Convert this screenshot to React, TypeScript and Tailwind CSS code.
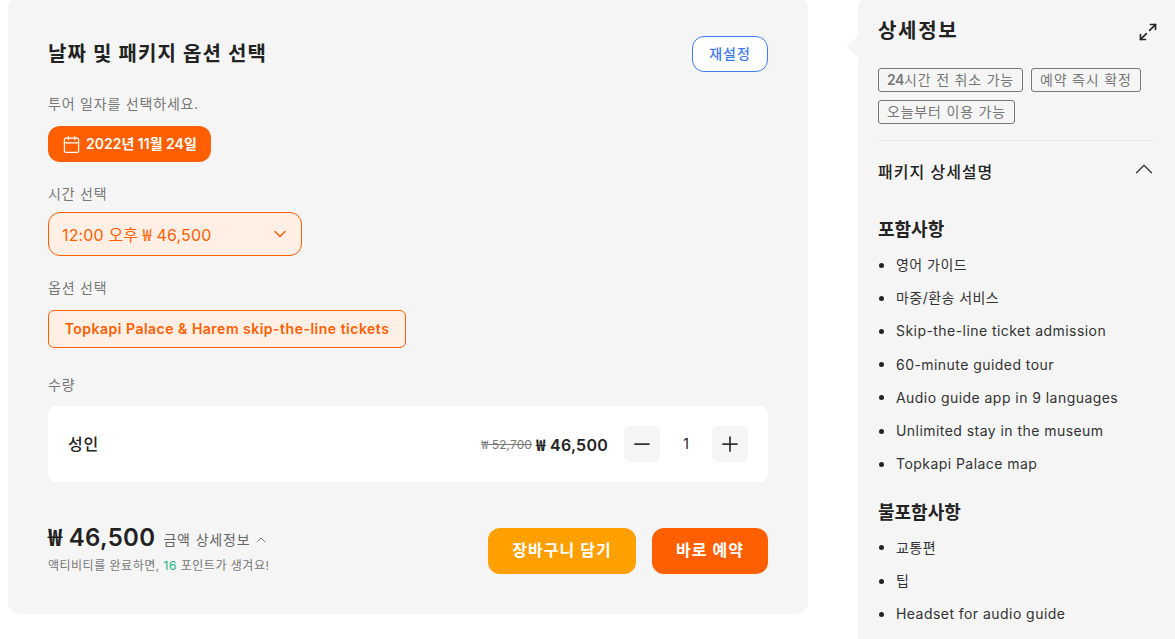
import React from 'react';
import { Calendar, ChevronDown, ChevronUp, Minus, Plus, Maximize2 } from 'lucide-react';

const font = "font-['Inter','Noto_Sans_CJK_KR',sans-serif]";

const included = [
  '영어 가이드',
  '마중/환송 서비스',
  'Skip-the-line ticket admission',
  '60-minute guided tour',
  'Audio guide app in 9 languages',
  'Unlimited stay in the museum',
  'Topkapi Palace map',
];

const excluded = ['교통편', '팁', 'Headset for audio guide'];

// the won sign comes from the CJK font, it is narrower than Inter's
const Won = () => <span className="font-['Noto_Sans_CJK_KR',sans-serif]">₩</span>;

const BulletList = ({ items }: { items: string[] }) => (
  <ul className="mt-[4.5px]">
    {items.map((item) => (
      <li key={item} className="flex h-[33.2px] items-center text-sm text-[#333] tracking-[0.45px]">
        <span className="ml-[1px] mr-[12px] h-[5px] w-[5px] rounded-full bg-[#222]" />
        {item}
      </li>
    ))}
  </ul>
);

const Tag = ({ children }: { children: React.ReactNode }) => (
  <span className="flex h-[24px] items-center rounded-[3px] border border-[#777] px-2 text-sm text-[#777] tracking-[0.8px]">
    {children}
  </span>
);

const App: React.FC = () => {
  return (
    <div className={`flex h-[639px] w-[1175px] overflow-hidden bg-white ${font}`}>
      {/* left panel */}
      <div className="ml-2 -mt-1 h-[618px] w-[800px] shrink-0 rounded-xl bg-[#f5f5f5] px-10 pt-[40px]">
        <div className="flex items-start justify-between">
          <h2 className="mt-[4px] text-xl font-semibold tracking-[1.05px] text-[#222]">날짜 및 패키지 옵션 선택</h2>
          <button className="h-[36px] w-[76px] rounded-xl border border-[#3f7bf5] bg-white text-sm font-medium tracking-[1px] text-[#3f7bf5]">
            재설정
          </button>
        </div>

        <p className="mt-[22px] text-sm tracking-[0.8px] text-[#777]">투어 일자를 선택하세요.</p>
        <div className="mt-[12px] flex h-[36px] w-[163px] items-center gap-[5px] rounded-xl bg-[#ff5f00] pl-[14px] text-sm font-semibold text-white">
          <Calendar size={19} strokeWidth={1.5} />
          2022년 11월 24일
        </div>

        <p className="mt-[22px] text-sm tracking-[0.8px] text-[#777]">시간 선택</p>
        <div className="mt-[8px] flex h-[44px] w-[254px] items-center justify-between rounded-xl border border-[#ff5f00] bg-[#ffefe5] pl-[13px] pr-[11px] text-base tracking-[0.15px] text-[#ff5f00]">
          <span>12:00 오후 <Won /> 46,500</span>
          <ChevronDown size={20} strokeWidth={1.75} />
        </div>

        <p className="mt-[22px] text-sm tracking-[0.8px] text-[#777]">옵션 선택</p>
        <div className="mt-[12px] flex h-[38px] w-[358px] items-center justify-center rounded-md border border-[#ff5f00] bg-[#ffefe5] text-sm font-semibold text-[#ff5f00] tracking-[0.5px]">
          Topkapi Palace &amp; Harem skip-the-line tickets
        </div>

        <p className="mt-[27px] text-sm tracking-[0.8px] text-[#777]">수량</p>
        <div className="mt-[11px] flex h-[76px] items-center justify-between rounded-lg bg-white px-5">
          <span className="text-base font-medium tracking-[0.7px] text-[#222]">성인</span>
          <div className="flex items-center">
            <span className="text-xs tracking-[0.1px] text-[#777] line-through"><Won /> 52,700</span>
            <span className="ml-1 text-base font-semibold tracking-[0.25px] text-[#222]"><Won /> 46,500</span>
            <button className="ml-4 flex h-9 w-9 items-center justify-center rounded-md bg-[#f5f5f5] text-[#333]">
              <Minus size={24} strokeWidth={1.75} />
            </button>
            <span className="w-[52px] text-center text-sm text-[#222]">1</span>
            <button className="flex h-9 w-9 items-center justify-center rounded-md bg-[#f5f5f5] text-[#333]">
              <Plus size={24} strokeWidth={1.75} />
            </button>
          </div>
        </div>

        <div className="mt-[46px] flex items-start justify-between">
          <div className="-mt-[8px]">
            <div className="flex items-center">
              <span className="text-2xl font-semibold tracking-[0.3px] text-[#222]"><Won /> 46,500</span>
              <span className="ml-2 mt-[6px] text-sm tracking-[0.85px] text-[#666]">금액 상세정보</span>
              <ChevronUp size={16} strokeWidth={1.25} className="ml-[2px] mt-[6px] text-[#666]" />
            </div>
            <p className="mt-[4px] text-xs tracking-[0.5px] text-[#777]">
              액티비티를 완료하면, <span className="text-[#1fb57f]">16</span> 포인트가 생겨요!
            </p>
          </div>
          <div className="flex gap-4">
            <button className="h-[46px] w-[148px] rounded-xl bg-[#ff9f00] pb-[2px] text-base font-semibold tracking-[1px] text-white">
              장바구니 담기
            </button>
            <button className="h-[46px] w-[116px] rounded-xl bg-[#ff5f00] pb-[2px] text-base font-semibold tracking-[1px] text-white">
              바로 예약
            </button>
          </div>
        </div>
      </div>

      {/* right panel */}
      <div className="relative ml-[50px] -mt-1 w-[317px] shrink-0 rounded-tl-xl bg-[#f5f5f5] pl-5 pr-[20px] pt-[21px]">
        <svg className="absolute left-[-12px] top-[36px]" width="13" height="30" viewBox="0 0 13 30">
          <path d="M13 0C12 6 8 7 3 12C0.5 14.5 0.5 15.5 3 18C8 23 12 24 13 30Z" fill="#f5f5f5" />
        </svg>
        <div className="flex h-[28px] items-center justify-between">
          <h3 className="text-xl font-semibold tracking-[1.7px] text-[#222]">상세정보</h3>
          <Maximize2 size={20} strokeWidth={2} className="mt-[2px] mr-[-3px] text-[#222]" />
        </div>
        <div className="mt-[23px] flex flex-wrap gap-x-2 gap-y-2">
          <Tag><b className="font-semibold tracking-[-0.4px]">24</b>시간 전 취소 가능</Tag>
          <Tag>예약 즉시 확정</Tag>
          <Tag>오늘부터 이용 가능</Tag>
        </div>
        <div className="mt-4 border-t border-[#e8e8e8]" />
        <div className="mt-[19px] flex items-center justify-between">
          <span className="text-base font-medium tracking-[1px] text-[#222]">패키지 상세설명</span>
          <ChevronUp size={30} strokeWidth={1} className="-my-2 mr-[-4px] -translate-y-[3px] text-[#333]" />
        </div>
        <h4 className="mt-[32px] text-lg font-semibold text-[#222]">포함사항</h4>
        <BulletList items={included} />
        <h4 className="mt-[18px] text-lg font-semibold text-[#222]">불포함사항</h4>
        <BulletList items={excluded} />
      </div>
    </div>
  );
};

export default App;
